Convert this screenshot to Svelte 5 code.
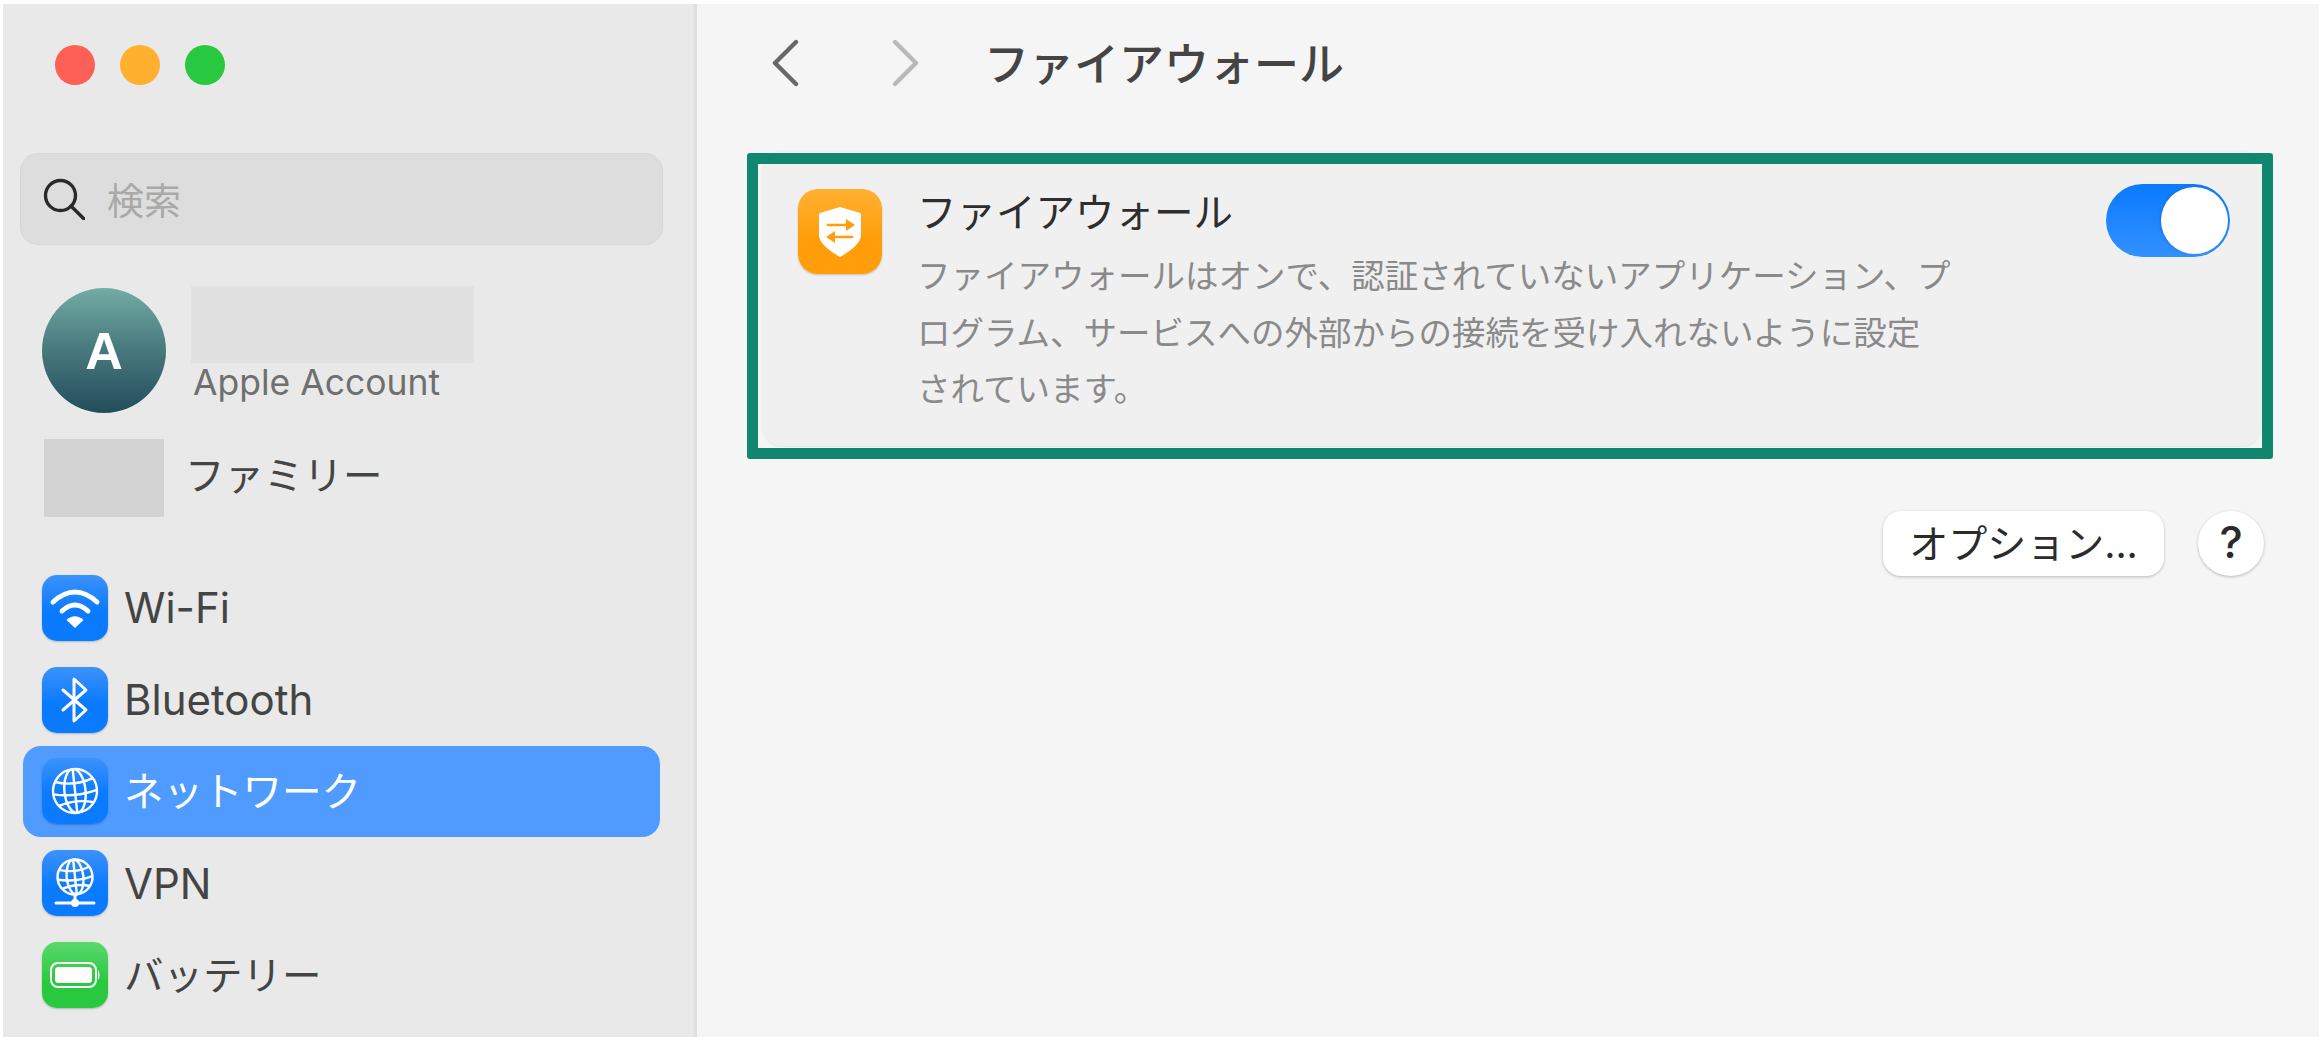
<script>
  let enabled = $state(true);

  const rows = [
    { id: "wifi", label: "Wi-Fi", tone: "blue", latin: true },
    { id: "bluetooth", label: "Bluetooth", tone: "blue", latin: true },
    { id: "network", label: "ネットワーク", tone: "blue", selected: true },
    { id: "vpn", label: "VPN", tone: "blue", latin: true },
    { id: "battery", label: "バッテリー", tone: "green" }
  ];
</script>

{#snippet globe(cx, cy, r)}
  <g fill="none" stroke="#fff" stroke-width="2.4" transform="rotate(-6 {cx} {cy})">
    <circle {cx} {cy} {r} />
    <ellipse {cx} {cy} rx={r * 0.48} ry={r} />
    <path d="M{cx} {cy - r}V{cy + r}" />
    <path d="M{cx - r * 0.86} {cy - r * 0.5}Q{cx} {cy - r * 0.2} {cx + r * 0.86} {cy - r * 0.5}" />
    <path d="M{cx - r} {cy + r * 0.05}Q{cx} {cy + r * 0.3} {cx + r} {cy + r * 0.05}" />
    <path d="M{cx - r * 0.8} {cy + r * 0.6}Q{cx} {cy + r * 0.35} {cx + r * 0.8} {cy + r * 0.6}" />
  </g>
{/snippet}

<div class="window">
  <aside class="sidebar">
    <div class="traffic">
      <span class="light red"></span>
      <span class="light amber"></span>
      <span class="light green"></span>
    </div>

    <div class="search">
      <svg width="42" height="42" viewBox="0 0 42 42" fill="none" stroke="#2a2a2a" stroke-width="3.4" stroke-linecap="round">
        <circle cx="17.5" cy="17.5" r="15" />
        <path d="M28 28l13 13" />
      </svg>
      <span>検索</span>
    </div>

    <div class="account">
      <div class="avatar">A</div>
      <div class="account-text">
        <div class="redacted"></div>
        <div class="account-label">Apple Account</div>
      </div>
    </div>

    <div class="family">
      <div class="family-box"></div>
      <span class="family-label">ファミリー</span>
    </div>

    <nav class="rows">
      {#each rows as row}
        <div class="row" class:selected={row.selected} class:latin={row.latin}>
          <span class="app-icon {row.tone}">
            <svg width="66" height="66" viewBox="0 0 66 66">
              {#if row.id === "wifi"}
                <g fill="none" stroke="#fff" stroke-width="5" stroke-linecap="round">
                  <path d="M11 27Q33 7 55 27" />
                  <path d="M20 36Q33 24 46 36" />
                </g>
                <path d="M24.5 45Q33 37.5 41.5 45L33 53Z" fill="#fff" />
              {:else if row.id === "bluetooth"}
                <path d="M21 23L44 43L32 54V12L44 23L21 43" fill="none" stroke="#fff" stroke-width="3" stroke-linejoin="round" stroke-linecap="round" />
              {:else if row.id === "network"}
                {@render globe(33, 33, 22)}
              {:else if row.id === "vpn"}
                {@render globe(33, 27, 17.5)}
                <path d="M33 44V53M14 53H52" stroke="#fff" stroke-width="3" stroke-linecap="round" />
                <circle cx="33" cy="53" r="4" fill="#fff" />
              {:else}
                <rect x="9" y="21" width="45" height="24" rx="7" fill="none" stroke="#fff" stroke-width="2" />
                <rect x="13" y="25" width="37" height="16" rx="3.5" fill="#fff" />
                <path d="M56 28Q59 33 56 38Z" fill="#fff" />
              {/if}
            </svg>
          </span>
          <span class="row-label">{row.label}</span>
        </div>
      {/each}
    </nav>
  </aside>

  <main class="content">
    <header class="toolbar">
      <svg width="28" height="48" viewBox="0 0 28 48" fill="none" stroke="#686868" stroke-width="4.4" stroke-linecap="round" stroke-linejoin="round">
        <path d="M25 3L4 24L25 45" />
      </svg>
      <svg class="forward" width="28" height="48" viewBox="0 0 28 48" fill="none" stroke="#b9b9b9" stroke-width="4.4" stroke-linecap="round" stroke-linejoin="round">
        <path d="M3 3L24 24L3 45" />
      </svg>
      <h1>ファイアウォール</h1>
    </header>

    <section class="card">
      <span class="highlight"></span>
      <div class="fw-icon">
        <svg width="42" height="50" viewBox="0 0 42 50">
          <path d="M21 0L41 6Q42 6.500 42 8V28Q42 38 21 50Q0 38 0 28V8Q0 6.500 1 6Z" fill="#fff" />
          <g fill="none" stroke="#ff9f0f" stroke-width="2.6" stroke-linecap="round">
            <path d="M9 18H29" />
            <path d="M33 30H14" />
          </g>
          <path d="M27 12L36 18L27 24Z" fill="#ff9f0f" />
          <path d="M16 24L7 30L16 36Z" fill="#ff9f0f" />
        </svg>
      </div>
      <div class="card-text">
        <h2>ファイアウォール</h2>
        <p>ファイアウォールはオンで、認証されていないアプリケーション、プ<br />ログラム、サービスへの外部からの接続を受け入れないように設定<br />されています。</p>
      </div>
      <button class="toggle" class:on={enabled} onclick={() => (enabled = !enabled)} aria-label="ファイアウォール">
        <span class="knob"></span>
      </button>
    </section>

    <div class="actions">
      <button class="options">オプション...</button>
      <button class="help">?</button>
    </div>
  </main>
</div>

<style>
  :global(body) {
    background: #fff;
    font-family: Inter, "Noto Sans CJK JP", sans-serif;
  }

  .window {
    display: flex;
    width: 2316px;
    height: 1033px;
    margin: 4px 5px 3px 3px;
    overflow: hidden;
  }

  .sidebar {
    flex: none;
    box-sizing: border-box;
    width: 694px;
    padding: 41px 31px 0 17px;
    background: #e8e9e8;
    border-right: 3px solid #dedfde;
  }

  .traffic {
    display: flex;
    gap: 25px;
    padding-left: 35px;
  }

  .light {
    width: 40px;
    height: 40px;
    border-radius: 50%;
  }

  .red { background: #fe5f57; }
  .amber { background: #feb02e; }
  .green { background: #28c840; }

  .search {
    display: flex;
    align-items: center;
    gap: 22px;
    box-sizing: border-box;
    height: 92px;
    margin-top: 68px;
    padding-left: 22px;
    border: 1px solid #d6d7d6;
    border-radius: 18px;
    background: #dcdddc;
    color: #a9a9a9;
    font-size: 37px;
  }

  .account {
    display: flex;
    gap: 25px;
    margin-top: 41px;
    padding-left: 22px;
  }

  .avatar {
    display: flex;
    align-items: center;
    justify-content: center;
    width: 124px;
    height: 125px;
    margin-top: 2px;
    border-radius: 50%;
    background: linear-gradient(#73aca4, #4b7d80 45%, #234d5c);
    color: #fff;
    font: 700 52px "Liberation Sans", sans-serif;
  }

  .redacted {
    width: 283px;
    height: 77px;
    background: #e1e1e1;
  }

  .account-label {
    margin-left: 2px;
    color: #6f6f6f;
    font-size: 35.500px;
    line-height: 40px;
  }

  .family {
    display: flex;
    align-items: center;
    gap: 21px;
    margin-top: 26px;
    padding-left: 24px;
    color: #454545;
    font-size: 39.500px;
  }

  .family-label {
    margin-bottom: 12px;
  }

  .family-box {
    width: 120px;
    height: 78px;
    background: #d3d3d3;
  }

  .rows {
    display: flex;
    flex-direction: column;
    margin-top: 45px;
  }

  .row {
    display: flex;
    align-items: center;
    gap: 16px;
    height: 91.750px;
    margin: 0 3px;
    padding-left: 19px;
    border-radius: 18px;
    color: #444;
    font-size: 39.500px;
  }

  .row-label {
    margin-bottom: 5px;
  }

  .row.latin {
    font-size: 42px;
  }

  .row.latin .row-label {
    margin-bottom: 0;
  }

  .row.selected {
    background: #4f9bff;
    color: #fff;
  }

  .app-icon {
    flex: none;
    width: 66px;
    height: 66px;
    border-radius: 15px;
    box-shadow: 0 1px 2px rgba(0, 0, 0, 0.22);
  }

  .app-icon svg {
    display: block;
  }

  .app-icon.blue { background: linear-gradient(#3c92fb, #0a7aff 55%); }
  .app-icon.green { background: linear-gradient(#5ad96d, #29c93f 60%); }

  .content {
    flex: 1;
    min-width: 0;
    background: #f5f5f5;
  }

  .toolbar {
    display: flex;
    align-items: center;
    height: 118px;
    padding-left: 74px;
  }

  .forward {
    margin-left: 93px;
  }

  h1 {
    margin: 0 0 4px 64px;
    color: #444;
    font-size: 45px;
    font-weight: 500;
  }

  .card {
    position: relative;
    display: flex;
    align-items: flex-start;
    box-sizing: border-box;
    width: 1500px;
    height: 296px;
    margin: 28px 0 0 65px;
    padding: 39px 32px 0 36px;
    border-radius: 20px;
    background: #f0f0f0;
    box-shadow: 0 1px 1px rgba(0, 0, 0, 0.06);
  }

  .highlight {
    position: absolute;
    top: 3px;
    left: -15px;
    right: -11px;
    bottom: -13px;
    border: 11px solid #12876f;
    border-radius: 3px;
    pointer-events: none;
  }

  .fw-icon {
    display: flex;
    align-items: center;
    justify-content: center;
    flex: none;
    width: 84px;
    height: 85px;
    border-radius: 20px;
    background: linear-gradient(#ffb031, #ff9d0a 62%);
    box-shadow: 0 1px 2px rgba(0, 0, 0, 0.2);
  }

  .card-text {
    flex: 1;
    margin-left: 35px;
  }

  h2 {
    margin: -2px 0 0;
    color: #2e2e2e;
    font-size: 39.500px;
    font-weight: 400;
    line-height: 52px;
  }

  p {
    margin: 9px 0 0;
    color: #8a8a8a;
    font-size: 33.500px;
    line-height: 56.500px;
  }

  .toggle {
    flex: none;
    position: relative;
    width: 124px;
    height: 73px;
    margin-top: -5px;
    padding: 0;
    border: 0;
    border-radius: 37px;
    background: linear-gradient(#0a7aff, #3391ff);
  }

  .knob {
    position: absolute;
    top: 3px;
    right: 2px;
    width: 67px;
    height: 67px;
    border-radius: 50%;
    background: #fff;
    box-shadow: -1px 0 3px rgba(0, 0, 0, 0.15);
  }

  .actions {
    display: flex;
    justify-content: flex-end;
    gap: 34px;
    margin-top: 65px;
    padding-right: 55px;
  }

  .actions button {
    height: 65px;
    padding: 0;
    border: 0;
    background: #fff;
    color: #2b2b2b;
    box-shadow: 0 1px 3px rgba(0, 0, 0, 0.25);
    font-family: inherit;
  }

  .options {
    width: 281px;
    border-radius: 18px;
    font-size: 39px;
    padding-bottom: 6px !important;
  }

  .help {
    width: 66px;
    border-radius: 50%;
    font-size: 44px;
    font-weight: 500;
    padding-bottom: 4px !important;
  }
</style>
